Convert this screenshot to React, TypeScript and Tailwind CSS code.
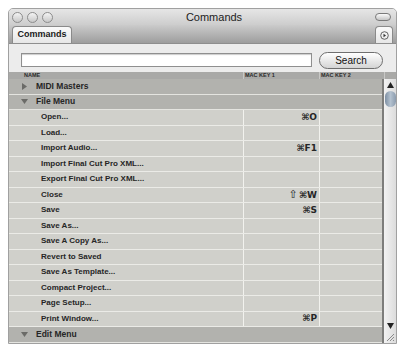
import React from "react";

type Row =
  | { kind: "group"; label: string; open: boolean }
  | { kind: "item"; label: string; key1?: string };

const rows: Row[] = [
  { kind: "group", label: "MIDI Masters", open: false },
  { kind: "group", label: "File Menu", open: true },
  { kind: "item", label: "Open...", key1: "⌘O" },
  { kind: "item", label: "Load..." },
  { kind: "item", label: "Import Audio...", key1: "⌘F1" },
  { kind: "item", label: "Import Final Cut Pro XML..." },
  { kind: "item", label: "Export Final Cut Pro XML..." },
  { kind: "item", label: "Close", key1: "⇧⌘W" },
  { kind: "item", label: "Save", key1: "⌘S" },
  { kind: "item", label: "Save As..." },
  { kind: "item", label: "Save A Copy As..." },
  { kind: "item", label: "Revert to Saved" },
  { kind: "item", label: "Save As Template..." },
  { kind: "item", label: "Compact Project..." },
  { kind: "item", label: "Page Setup..." },
  { kind: "item", label: "Print Window...", key1: "⌘P" },
  { kind: "group", label: "Edit Menu", open: true },
];

const font = { fontFamily: '"Liberation Sans", Arial, "DejaVu Sans", sans-serif' };

const Light = () => (
  <div className="w-[11px] h-[11px] rounded-full border border-[#8c8c8c] bg-gradient-to-b from-[#f4f4f4] to-[#c8c8c8]" />
);

const Triangle = ({ open }: { open: boolean }) =>
  open ? (
    <svg width="7" height="5" viewBox="0 0 7 5" className="ml-[12px] mr-[8px]">
      <path d="M0 0 L7 0 L3.5 5 Z" fill="#6b6b68" />
    </svg>
  ) : (
    <svg width="5" height="7" viewBox="0 0 5 7" className="ml-[13px] mr-[9px]">
      <path d="M0 0 L5 3.5 L0 7 Z" fill="#6b6b68" />
    </svg>
  );

const KeyText = ({ text }: { text?: string }) => {
  if (!text) return null;
  if (text.startsWith("⇧")) {
    return (
      <span>
        <span className="text-[11px] font-normal mr-[1px]">⇧</span>
        {text.slice(1)}
      </span>
    );
  }
  return <span>{text}</span>;
};

export default function App() {
  return (
    <div className="w-[415px] h-[347px] bg-white pt-[8px] pl-[8px] overflow-hidden" style={font}>
      <div className="w-[389px] h-[336px] flex flex-col rounded-t-[5px] border border-[#a0a0a0] bg-[#ececec] overflow-hidden">
        {/* title bar */}
        <div className="h-[16px] flex items-center bg-gradient-to-b from-[#e6e6e6] to-[#cdcdcd] px-[3px]">
          <div className="flex gap-[4px]">
            <Light />
            <Light />
            <Light />
          </div>
          <div className="flex-1 text-center text-[11px] text-[#222] leading-none">Commands</div>
          <div className="w-[16px] h-[8px] rounded-full border border-[#7a7a7a] bg-gradient-to-b from-[#fafafa] to-[#c6c6c6] mr-[2px]" />
        </div>
        {/* tab bar */}
        <div className="h-[19px] flex items-end bg-gradient-to-b from-[#cbcbcb] to-[#9d9d9d] px-[3px] border-b border-[#8e8e8e]">
          <div className="h-[17px] w-[60px] rounded-t-[4px] border border-b-0 border-[#8a8a8a] bg-gradient-to-b from-[#fafafa] to-[#e6e6e6] flex items-center justify-center text-[9px] font-bold text-[#1a1a1a]">
            Commands
          </div>
          <div className="flex-1" />
          <div className="h-[17px] w-[18px] rounded-t-[4px] border border-b-0 border-[#8a8a8a] bg-gradient-to-b from-[#fafafa] to-[#e6e6e6] flex items-center justify-center">
            <svg width="9" height="9" viewBox="0 0 9 9">
              <circle cx="4.5" cy="4.5" r="3.8" fill="none" stroke="#555" strokeWidth="0.9" />
              <path d="M3.5 2.8 L6 4.5 L3.5 6.2 Z" fill="#333" />
            </svg>
          </div>
        </div>
        {/* search row */}
        <div className="flex items-center pt-[7px] pl-[12px] pr-[12px] h-[25px]">
          <div className="w-[291px] h-[14px] bg-white border border-[#8f8f8f] shadow-[inset_0_1px_1px_rgba(0,0,0,0.2)]" />
          <div className="ml-[7px] w-[64px] h-[17px] rounded-full border border-[#6f6f6f] bg-gradient-to-b from-[#ffffff] to-[#d4d4d4] flex items-center justify-center text-[10px] text-[#111]">
            Search
          </div>
        </div>
        {/* header */}
        <div className="mt-[3px] h-[7px] flex bg-[#a9a9a7] text-[5.5px] font-bold text-[#2a2a2a] leading-[7px]">
          <div className="w-[234px] pl-[15px]">NAME</div>
          <div className="w-[76px] pl-[1px] border-l border-[#c8c8c6]">MAC KEY 1</div>
          <div className="w-[65px] pl-[1px] border-l border-[#c8c8c6]">MAC KEY 2</div>
          <div className="flex-1 border-l border-[#c8c8c6]" />
        </div>
        {/* table + scrollbar */}
        <div className="flex flex-1 min-h-0">
          <div className="flex-1 flex flex-col text-[8px] font-bold text-[#262626] border-r-2 border-[#7d7d7b]">
            {rows.map((r, i) =>
              r.kind === "group" ? (
                <div key={i} className="h-[15.5px] shrink-0 flex items-center bg-[#b2b2ae] border-b border-[#e4e4e0]">
                  <Triangle open={r.open} />
                  <span className="text-[8.5px]">{r.label}</span>
                </div>
              ) : (
                <div key={i} className="h-[15.5px] shrink-0 flex bg-[#d0d0cb] border-b border-[#ebebe7]">
                  <div className="w-[234px] pl-[32px] flex items-center">{r.label}</div>
                  <div
                    className="w-[76px] border-l border-[#f2f2ee] flex items-center justify-end pr-[2px] text-[9px]"
                    style={{ fontFamily: '"DejaVu Sans", sans-serif' }}
                  >
                    <KeyText text={r.key1} />
                  </div>
                  <div className="flex-1 border-l border-[#f2f2ee]" />
                </div>
              )
            )}
          </div>
          {/* scrollbar */}
          <div className="w-[12px] flex flex-col items-center bg-gradient-to-r from-[#f2f2f2] to-[#dcdcdc]">
            <svg width="7" height="6" viewBox="0 0 7 6" className="mt-[3px]">
              <path d="M3.5 0 L7 6 L0 6 Z" fill="#222" />
            </svg>
            <div className="mt-[3px] w-[11px] h-[16px] rounded-full bg-gradient-to-r from-[#7e90a4] via-[#b3c1cf] to-[#8c9cae]" />
            <div className="flex-1" />
            <svg width="7" height="6" viewBox="0 0 7 6" className="mb-[3px]">
              <path d="M0 0 L7 0 L3.5 6 Z" fill="#222" />
            </svg>
            <svg width="10" height="10" viewBox="0 0 10 10" className="mb-[1px]">
              <path d="M9 2 L2 9 M9 5 L5 9 M9 8 L8 9" stroke="#8a8a8a" strokeWidth="1" />
            </svg>
          </div>
        </div>
      </div>
    </div>
  );
}
